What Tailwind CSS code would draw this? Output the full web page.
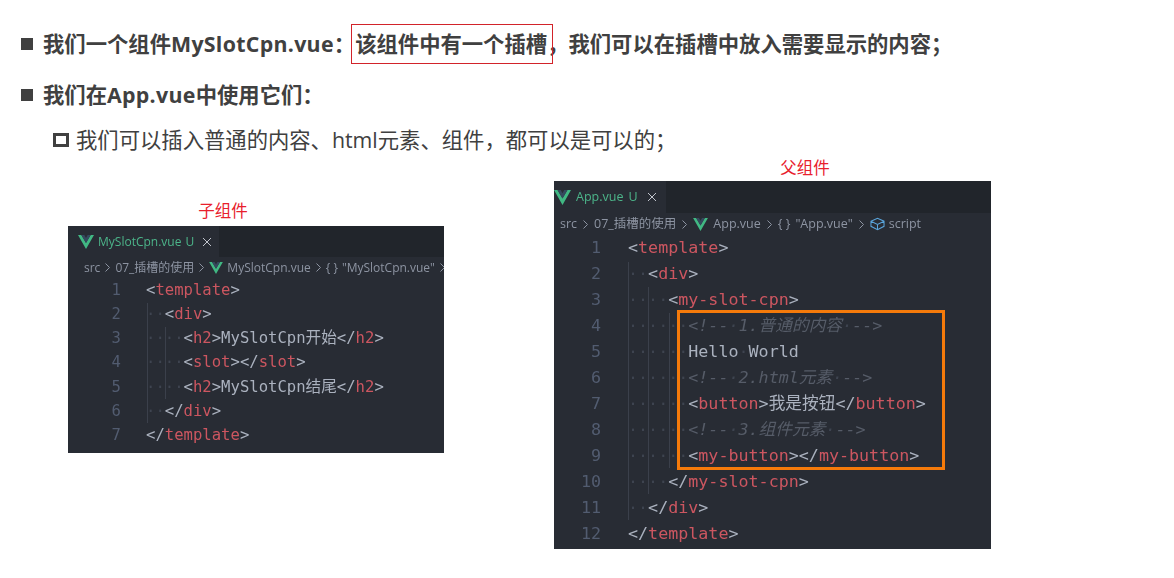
<!DOCTYPE html>
<html lang="zh">
<head>
<meta charset="utf-8">
<script src="https://cdn.jsdelivr.net/npm/@tailwindcss/browser@4"></script>
</head>
<body class="bg-white w-[1174px] h-[578px] overflow-hidden text-[#404040] font-['Open_Sans','Noto_Sans_CJK_SC',sans-serif]">
<div class="pl-[21px] pt-[24px]">
  <div class="h-[40px] flex items-center gap-[10px] text-[21.33px] font-bold">
    <span class="w-[12px] h-[12px] bg-[#404040]"></span>
    <p class="whitespace-pre">我们一个组件<span class="tracking-[0.3px]">MySlotCpn.vue</span>：<span class="relative">该组件中有一个插槽，<span class="absolute left-[-4px] top-[-5px] w-[202px] h-[40px] border border-[#d2232a]"></span></span>我们可以在插槽中放入需要显示的内容；</p>
  </div>
  <div class="h-[40px] mt-[11px] flex items-center gap-[10px] text-[21.33px] font-bold">
    <span class="w-[12px] h-[12px] bg-[#404040]"></span>
    <p>我们在<span class="tracking-[0.3px]">App.vue</span>中使用它们：</p>
  </div>
  <div class="h-[40px] mt-[5px] ml-[32px] flex items-center gap-[7px] text-[21.33px]">
    <span class="w-[16px] h-[14px] border-[3px] border-[#404040]"></span>
    <p>我们可以插入普通的内容、html元素、组件，都可以是可以的；</p>
  </div>
</div>

<div class="flex items-start mt-[-3px]">
  <!-- child panel -->
  <div class="ml-[68px] mt-[41px] w-[376px]">
    <p class="h-[25px] text-center text-[16.5px] leading-[25px] text-[#e8202c] pr-[66px] mb-[3px]">子组件</p>
    <div class="h-[227px] bg-[#282c34] font-['DejaVu_Sans_Mono','Noto_Sans_CJK_SC',monospace] text-[15.6px] text-[#abb2bf] overflow-hidden relative blur-[0.3px]">
      <div class="h-[31px] bg-[#21252b] flex">
        <div class="w-[151px] bg-[#282c34] flex items-center pl-[10px] gap-[4px] font-['Open_Sans',sans-serif] text-[12px] text-[#4cb58a] whitespace-pre">
          <svg class="w-[16px] h-[14px]" viewBox="0 0 24 21"><path fill="#41b883" d="M0 0h5l7 12 7-12h5L12 21z"/><path fill="#35495e" d="M5 0h4.500l2.500 4.500L14.500 0H19l-7 12z"/></svg>
          <span>MySlotCpn.vue</span><span>U</span>
          <svg class="w-[10px] h-[10px] ml-[4px]" viewBox="0 0 10 10"><path d="M1 1l8 8M9 1l-8 8" stroke="#c0c4cc" stroke-width="1"/></svg>
        </div>
      </div>
      <div class="h-[21px] pl-[16px] flex items-center gap-[4px] font-['Open_Sans','Noto_Sans_CJK_SC',sans-serif] text-[12px] text-[#8d94a2] whitespace-pre overflow-hidden">
        <span>src</span><svg class="w-[7px] h-[9px] shrink-0" viewBox="0 0 7 9" fill="none" stroke="#8d94a2"><path d="M1.500 .5l4 4-4 4"/></svg><span>07_插槽的使用</span><svg class="w-[7px] h-[9px] shrink-0" viewBox="0 0 7 9" fill="none" stroke="#8d94a2"><path d="M1.500 .5l4 4-4 4"/></svg>
        <svg class="w-[14px] h-[12px] shrink-0" viewBox="0 0 24 21"><path fill="#41b883" d="M0 0h5l7 12 7-12h5L12 21z"/><path fill="#35495e" d="M5 0h4.500l2.500 4.500L14.500 0H19l-7 12z"/></svg>
        <span>MySlotCpn.vue</span><svg class="w-[7px] h-[9px] shrink-0" viewBox="0 0 7 9" fill="none" stroke="#8d94a2"><path d="M1.500 .5l4 4-4 4"/></svg><span>{ }</span><span>"MySlotCpn.vue"</span><svg class="w-[7px] h-[9px] shrink-0" viewBox="0 0 7 9" fill="none" stroke="#8d94a2"><path d="M1.500 .5l4 4-4 4"/></svg>
      </div>
      <div class="leading-[24.17px] whitespace-nowrap">
        <div class="flex h-[24.17px]"><span class="w-[53px] text-right text-[#525c70]">1</span><span class="ml-[25px]">&lt;<span class="text-[#cc5660]">template</span>&gt;</span></div>
        <div class="flex h-[24.17px]"><span class="w-[53px] text-right text-[#525c70]">2</span><span class="ml-[25px]"><span class="text-[#3e4450]">··</span>&lt;<span class="text-[#cc5660]">div</span>&gt;</span></div>
        <div class="flex h-[24.17px]"><span class="w-[53px] text-right text-[#525c70]">3</span><span class="ml-[25px]"><span class="text-[#3e4450]">····</span>&lt;<span class="text-[#cc5660]">h2</span>&gt;MySlotCpn开始&lt;/<span class="text-[#cc5660]">h2</span>&gt;</span></div>
        <div class="flex h-[24.17px]"><span class="w-[53px] text-right text-[#525c70]">4</span><span class="ml-[25px]"><span class="text-[#3e4450]">····</span>&lt;<span class="text-[#cc5660]">slot</span>&gt;&lt;/<span class="text-[#cc5660]">slot</span>&gt;</span></div>
        <div class="flex h-[24.17px]"><span class="w-[53px] text-right text-[#525c70]">5</span><span class="ml-[25px]"><span class="text-[#3e4450]">····</span>&lt;<span class="text-[#cc5660]">h2</span>&gt;MySlotCpn结尾&lt;/<span class="text-[#cc5660]">h2</span>&gt;</span></div>
        <div class="flex h-[24.17px]"><span class="w-[53px] text-right text-[#525c70]">6</span><span class="ml-[25px]"><span class="text-[#3e4450]">··</span>&lt;/<span class="text-[#cc5660]">div</span>&gt;</span></div>
        <div class="flex h-[24.17px]"><span class="w-[53px] text-right text-[#525c70]">7</span><span class="ml-[25px]">&lt;/<span class="text-[#cc5660]">template</span>&gt;</span></div>
      </div>
      <span class="absolute left-[79px] top-[77px] w-px h-[120px] bg-[#3b404b]"></span>
      <span class="absolute left-[97px] top-[101px] w-px h-[72px] bg-[#3b404b]"></span>
    </div>
  </div>

  <!-- parent panel -->
  <div class="ml-[110px] mt-[-2px] w-[437px]">
    <p class="h-[25px] text-center text-[16.5px] leading-[25px] text-[#e8202c] pl-[65px] mb-[1px]">父组件</p>
    <div class="h-[368px] bg-[#282c34] font-['DejaVu_Sans_Mono','Noto_Sans_CJK_SC',monospace] text-[16.7px] text-[#abb2bf] overflow-hidden relative blur-[0.3px]">
      <div class="h-[32px] bg-[#21252b] flex">
        <div class="w-[112px] bg-[#282c34] flex items-center gap-[5px] font-['Open_Sans',sans-serif] text-[12.500px] text-[#4cb58a] whitespace-pre">
          <svg class="w-[17px] h-[15px]" viewBox="0 0 24 21"><path fill="#41b883" d="M0 0h5l7 12 7-12h5L12 21z"/><path fill="#35495e" d="M5 0h4.500l2.500 4.500L14.500 0H19l-7 12z"/></svg>
          <span>App.vue</span><span>U</span>
          <svg class="w-[10px] h-[10px] ml-[4px]" viewBox="0 0 10 10"><path d="M1 1l8 8M9 1l-8 8" stroke="#c0c4cc" stroke-width="1"/></svg>
        </div>
      </div>
      <div class="h-[22px] pl-[6px] flex items-center gap-[5px] font-['Open_Sans','Noto_Sans_CJK_SC',sans-serif] text-[12.500px] text-[#8d94a2] whitespace-pre">
        <span>src</span><svg class="w-[7px] h-[9px] shrink-0" viewBox="0 0 7 9" fill="none" stroke="#8d94a2"><path d="M1.500 .5l4 4-4 4"/></svg><span>07_插槽的使用</span><svg class="w-[7px] h-[9px] shrink-0" viewBox="0 0 7 9" fill="none" stroke="#8d94a2"><path d="M1.500 .5l4 4-4 4"/></svg>
        <svg class="w-[15px] h-[13px] shrink-0" viewBox="0 0 24 21"><path fill="#41b883" d="M0 0h5l7 12 7-12h5L12 21z"/><path fill="#35495e" d="M5 0h4.500l2.500 4.500L14.500 0H19l-7 12z"/></svg>
        <span>App.vue</span><svg class="w-[7px] h-[9px] shrink-0" viewBox="0 0 7 9" fill="none" stroke="#8d94a2"><path d="M1.500 .5l4 4-4 4"/></svg><span>{ }</span><span>"App.vue"</span><svg class="w-[7px] h-[9px] shrink-0" viewBox="0 0 7 9" fill="none" stroke="#8d94a2"><path d="M1.500 .5l4 4-4 4"/></svg>
        <svg class="w-[15px] h-[14px] shrink-0" viewBox="0 0 16 15" fill="none" stroke="#5aa5dc" stroke-width="1.100"><path d="M1 4.500L8 1.500l7 3v5.500l-7 3.500-7-3.500zM1 4.500l7 3.500 7-3.500M8 8v5.500"/></svg>
        <span class="ml-[-1px]">script</span>
      </div>
      <div class="mt-[-1px] leading-[26px] whitespace-nowrap">
        <div class="flex h-[26px]"><span class="w-[47px] text-right text-[#525c70]">1</span><span class="ml-[27px]">&lt;<span class="text-[#cc5660]">template</span>&gt;</span></div>
        <div class="flex h-[26px]"><span class="w-[47px] text-right text-[#525c70]">2</span><span class="ml-[27px]"><span class="text-[#3e4450]">··</span>&lt;<span class="text-[#cc5660]">div</span>&gt;</span></div>
        <div class="flex h-[26px]"><span class="w-[47px] text-right text-[#525c70]">3</span><span class="ml-[27px]"><span class="text-[#3e4450]">····</span>&lt;<span class="text-[#cc5660]">my-slot-cpn</span>&gt;</span></div>
        <div class="flex h-[26px]"><span class="w-[47px] text-right text-[#525c70]">4</span><span class="ml-[27px]"><span class="text-[#3e4450]">······</span><span class="italic text-[#565c68]">&lt;!--<span class="text-[#3e4450]">·</span>1.普通的内容<span class="text-[#3e4450]">·</span>--&gt;</span></span></div>
        <div class="flex h-[26px]"><span class="w-[47px] text-right text-[#525c70]">5</span><span class="ml-[27px]"><span class="text-[#3e4450]">······</span>Hello<span class="text-[#3e4450]">·</span>World</span></div>
        <div class="flex h-[26px]"><span class="w-[47px] text-right text-[#525c70]">6</span><span class="ml-[27px]"><span class="text-[#3e4450]">······</span><span class="italic text-[#565c68]">&lt;!--<span class="text-[#3e4450]">·</span>2.html元素<span class="text-[#3e4450]">·</span>--&gt;</span></span></div>
        <div class="flex h-[26px]"><span class="w-[47px] text-right text-[#525c70]">7</span><span class="ml-[27px]"><span class="text-[#3e4450]">······</span>&lt;<span class="text-[#cc5660]">button</span>&gt;我是按钮&lt;/<span class="text-[#cc5660]">button</span>&gt;</span></div>
        <div class="flex h-[26px]"><span class="w-[47px] text-right text-[#525c70]">8</span><span class="ml-[27px]"><span class="text-[#3e4450]">······</span><span class="italic text-[#565c68]">&lt;!--<span class="text-[#3e4450]">·</span>3.组件元素<span class="text-[#3e4450]">·</span>--&gt;</span></span></div>
        <div class="flex h-[26px]"><span class="w-[47px] text-right text-[#525c70]">9</span><span class="ml-[27px]"><span class="text-[#3e4450]">······</span>&lt;<span class="text-[#cc5660]">my-button</span>&gt;&lt;/<span class="text-[#cc5660]">my-button</span>&gt;</span></div>
        <div class="flex h-[26px]"><span class="w-[47px] text-right text-[#525c70]">10</span><span class="ml-[27px]"><span class="text-[#3e4450]">····</span>&lt;/<span class="text-[#cc5660]">my-slot-cpn</span>&gt;</span></div>
        <div class="flex h-[26px]"><span class="w-[47px] text-right text-[#525c70]">11</span><span class="ml-[27px]"><span class="text-[#3e4450]">··</span>&lt;/<span class="text-[#cc5660]">div</span>&gt;</span></div>
        <div class="flex h-[26px]"><span class="w-[47px] text-right text-[#525c70]">12</span><span class="ml-[27px]">&lt;/<span class="text-[#cc5660]">template</span>&gt;</span></div>
      </div>
      <span class="absolute left-[74px] top-[81px] w-px h-[258px] bg-[#3b404b]"></span>
      <span class="absolute left-[94px] top-[106px] w-px h-[207px] bg-[#3b404b]"></span>
      <span class="absolute left-[115px] top-[132px] w-px h-[155px] bg-[#3b404b]"></span>
      <span class="absolute left-[123px] top-[129px] w-[268px] h-[160px] border-[3px] border-[#f57a0a]"></span>
    </div>
  </div>
</div>
</body>
</html>
